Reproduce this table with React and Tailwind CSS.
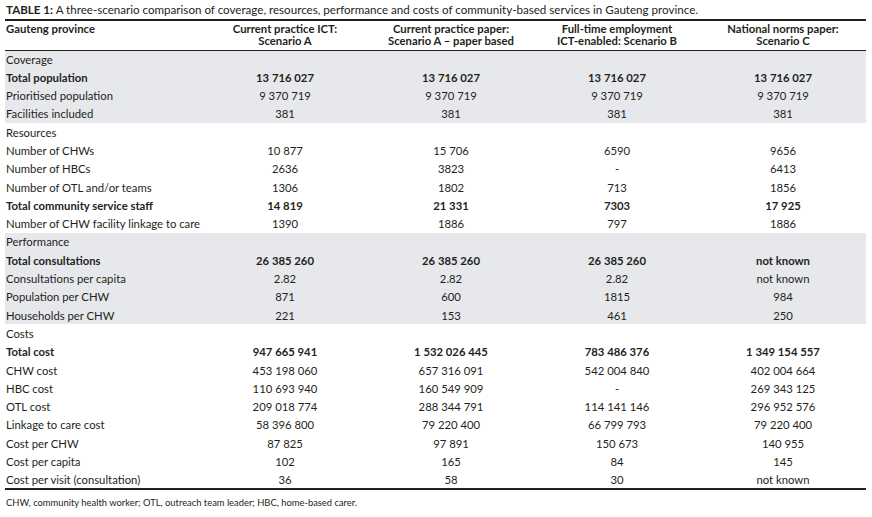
const sections = [
  {
    name: 'Coverage',
    shaded: true,
    rows: [
      ['Total population', '13 716 027', '13 716 027', '13 716 027', '13 716 027', true],
      ['Prioritised population', '9 370 719', '9 370 719', '9 370 719', '9 370 719'],
      ['Facilities included', '381', '381', '381', '381'],
    ],
  },
  {
    name: 'Resources',
    shaded: false,
    rows: [
      ['Number of CHWs', '10 877', '15 706', '6590', '9656'],
      ['Number of HBCs', '2636', '3823', '-', '6413'],
      ['Number of OTL and/or teams', '1306', '1802', '713', '1856'],
      ['Total community service staff', '14 819', '21 331', '7303', '17 925', true],
      ['Number of CHW facility linkage to care', '1390', '1886', '797', '1886'],
    ],
  },
  {
    name: 'Performance',
    shaded: true,
    rows: [
      ['Total consultations', '26 385 260', '26 385 260', '26 385 260', 'not known', true],
      ['Consultations per capita', '2.82', '2.82', '2.82', 'not known'],
      ['Population per CHW', '871', '600', '1815', '984'],
      ['Households per CHW', '221', '153', '461', '250'],
    ],
  },
  {
    name: 'Costs',
    shaded: false,
    rows: [
      ['Total cost', '947 665 941', '1 532 026 445', '783 486 376', '1 349 154 557', true],
      ['CHW cost', '453 198 060', '657 316 091', '542 004 840', '402 004 664'],
      ['HBC cost', '110 693 940', '160 549 909', '-', '269 343 125'],
      ['OTL cost', '209 018 774', '288 344 791', '114 141 146', '296 952 576'],
      ['Linkage to care cost', '58 396 800', '79 220 400', '66 799 793', '79 220 400'],
      ['Cost per CHW', '87 825', '97 891', '150 673', '140 955'],
      ['Cost per capita', '102', '165', '84', '145'],
      ['Cost per visit (consultation)', '36', '58', '30', 'not known'],
    ],
  },
];

export default function App() {
  return (
    <div className="w-[872px] h-[517px] bg-white text-[#231f20] pl-[5px] pt-[3px]" style={{ fontFamily: 'Lato, "Open Sans", sans-serif' }}>
      <p className="text-[11.6px] leading-[14px] pl-[1px]">
        <span className="font-bold">TABLE 1:</span> A three-scenario comparison of coverage, resources, performance and costs of community-based services in Gauteng province.
      </p>
      <table className="w-[861px] table-fixed border-collapse text-[11.3px] mt-[2px] border-t-2 border-b-2 border-[#231f20]">
        <colgroup>
          <col className="w-[197px]" />
          <col className="w-[166px]" />
          <col className="w-[166px]" />
          <col className="w-[166px]" />
          <col className="w-[166px]" />
        </colgroup>
        <thead>
          <tr className="border-b border-[#231f20] h-[30px] align-top font-bold leading-[12px]">
            <th className="text-left font-bold pl-[1px] pt-[2px]">Gauteng province</th>
            <th className="font-bold pt-[2px]">Current practice ICT:<br />Scenario A</th>
            <th className="font-bold pt-[2px]">Current practice paper:<br />Scenario A – paper based</th>
            <th className="font-bold pt-[2px]">Full-time employment<br />ICT-enabled: Scenario B</th>
            <th className="font-bold pt-[2px]">National norms paper:<br />Scenario C</th>
          </tr>
        </thead>
        <tbody>
          {sections.map((s) => [
            <tr key={s.name} className={`h-[18.3px] ${s.shaded ? 'bg-[#e7e8ec]' : ''}`}>
              <td className="pl-[1px] leading-none" colSpan={5}>{s.name}</td>
            </tr>,
            ...s.rows.map((r) => (
              <tr key={r[0]} className={`h-[18.3px] leading-none ${s.shaded ? 'bg-[#e7e8ec]' : ''} ${r[5] ? 'font-bold' : ''}`}>
                <td className="pl-[1px]">{r[0]}</td>
                <td className="text-center">{r[1]}</td>
                <td className="text-center">{r[2]}</td>
                <td className="text-center">{r[3]}</td>
                <td className="text-center">{r[4]}</td>
              </tr>
            )),
          ])}
        </tbody>
      </table>
      <p className="text-[9.4px] leading-[12px] mt-[7px] pl-[1px]">
        CHW, community health worker; OTL, outreach team leader; HBC, home-based carer.
      </p>
    </div>
  );
}
